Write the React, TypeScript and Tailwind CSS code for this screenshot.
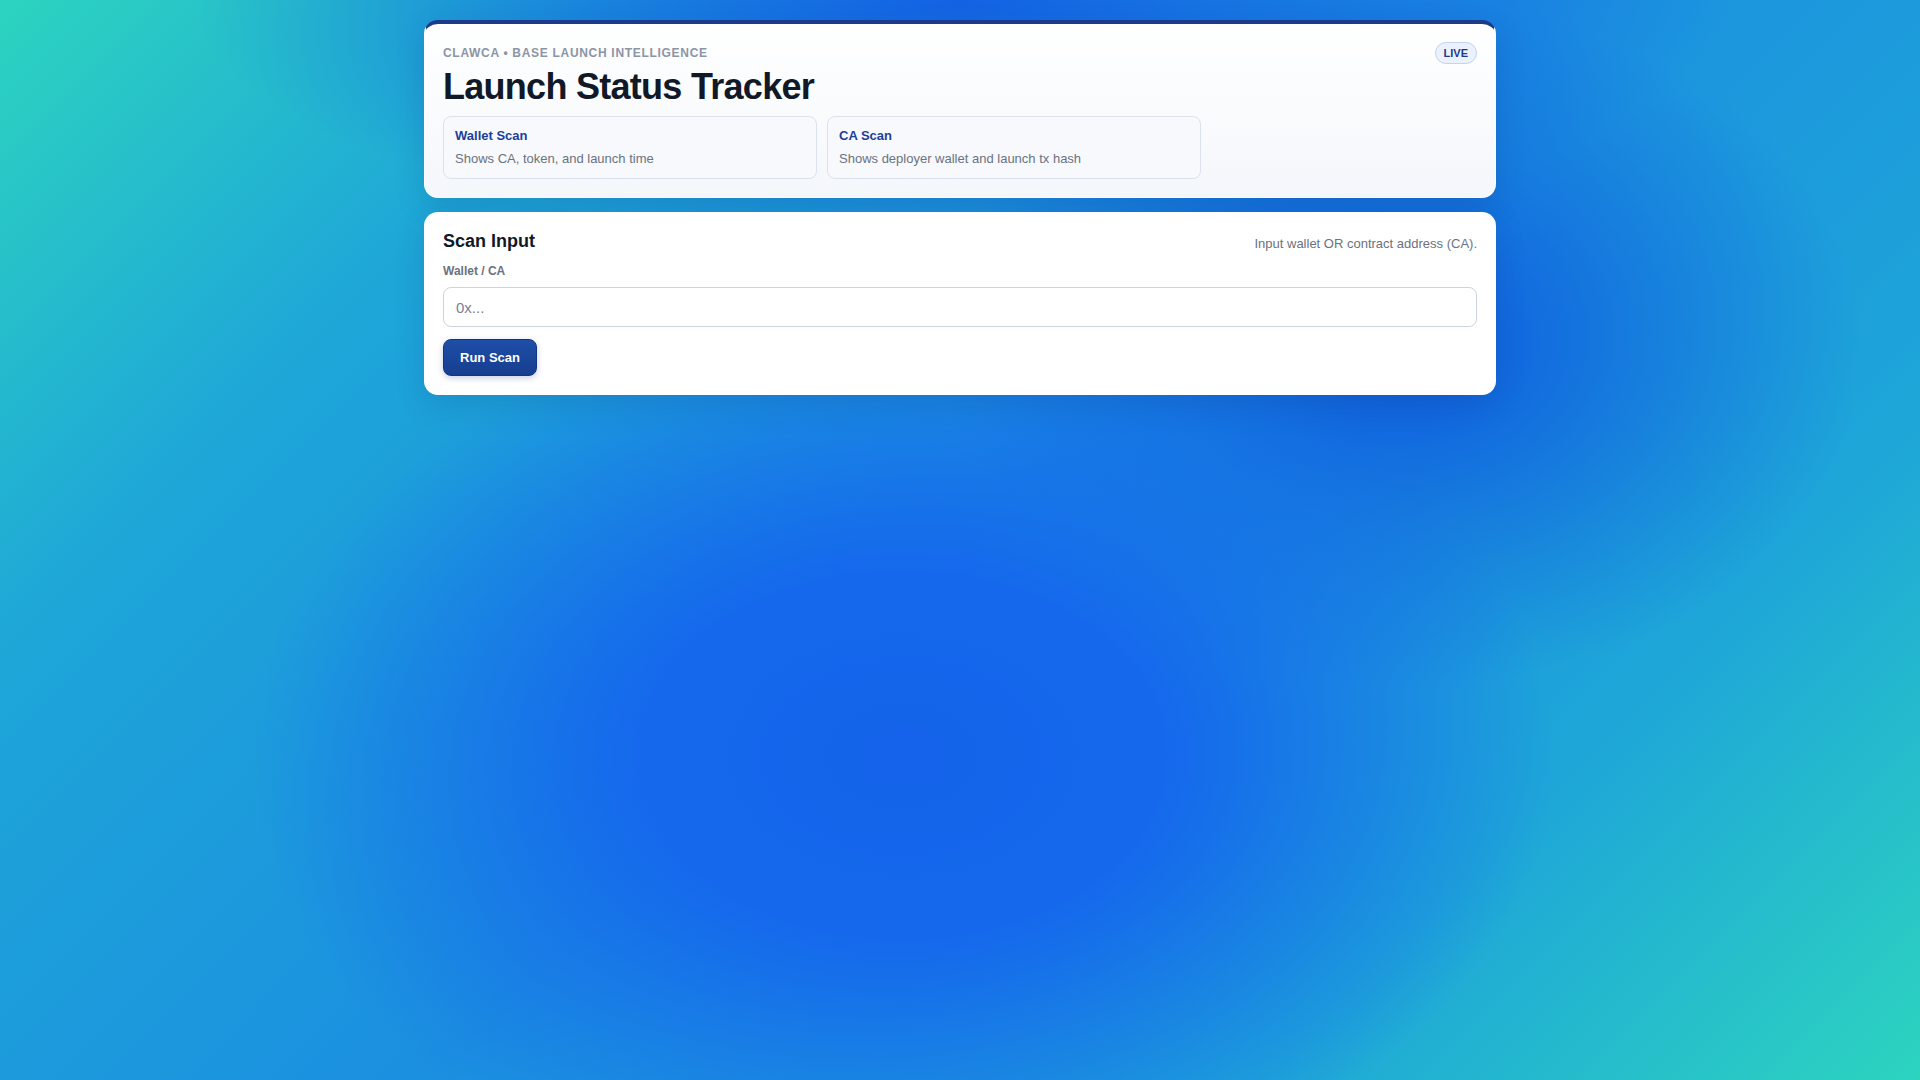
const scanModes = [
  { title: "Wallet Scan", desc: "Shows CA, token, and launch time" },
  { title: "CA Scan", desc: "Shows deployer wallet and launch tx hash" },
];

export default function App() {
  return (
    <div className="min-h-screen w-full font-['Liberation_Sans',Arial,sans-serif] bg-[radial-gradient(ellipse_34%_42%_at_47%_70%,#1463ea_0%,#1568ec_40%,rgba(22,104,236,0)_100%),radial-gradient(ellipse_24%_32%_at_73%_32%,#0f5bdf_0%,rgba(15,91,223,0)_100%),radial-gradient(ellipse_40%_22%_at_50%_0%,#1462e4_0%,rgba(20,98,228,0)_100%),linear-gradient(135deg,#2dd4bf_0%,#1ea6d8_22%,#1b8fe0_50%,#1ea6d8_78%,#2dd4bf_100%)]">
      <div className="mx-auto flex max-w-[1072px] flex-col gap-[14px] pt-5">
        {/* header card */}
        <div className="rounded-[14px] border border-t-4 border-white/70 border-t-[#1e3a8a] bg-gradient-to-b from-white to-[#f4f7fb] px-[18px] pb-[18px] pt-[18px] shadow-[0_10px_30px_rgba(15,40,100,0.15)]">
          <div className="flex items-center justify-between">
            <span className="text-[12px] font-bold uppercase tracking-[0.058em] text-[#8b95a6]">
              CLAWCA • Base Launch Intelligence
            </span>
            <span className="flex h-[22px] items-center rounded-full border border-[#c3d3f3] bg-[#ebf1fd] px-[8px] text-[11px] font-bold text-[#1e3a8a]">
              LIVE
            </span>
          </div>
          <h1 className="mt-[5px] text-[36px] font-bold leading-none tracking-[-0.02em] text-[#111827]">
            Launch Status Tracker
          </h1>
          <div className="mt-[11px] grid max-w-[758px] grid-cols-2 gap-[10px]">
            {scanModes.map((m) => (
              <div
                key={m.title}
                className="rounded-[8px] border border-[#dce2eb] bg-[#f7f9fd] p-[11px]"
              >
                <div className="text-[13px] font-bold leading-[16px] text-[#1d3f9a]">
                  {m.title}
                </div>
                <div className="mt-[7px] text-[13px] leading-[16px] text-[#6b7280]">
                  {m.desc}
                </div>
              </div>
            ))}
          </div>
        </div>

        {/* scan input card */}
        <div className="rounded-[14px] border border-white/70 bg-white px-[18px] pb-[18px] pt-[18px] shadow-[0_10px_30px_rgba(15,40,100,0.15)]">
          <div className="flex items-end justify-between">
            <h2 className="text-[18px] font-bold leading-[20px] text-[#111827]">Scan Input</h2>
            <span className="text-[13px] leading-[15px] text-[#6b7280]">
              Input wallet OR contract address (CA).
            </span>
          </div>
          <label className="mt-[13px] mb-[9px] block text-[12px] font-bold leading-[14px] text-[#6b7280]">
            Wallet / CA
          </label>
          <input
            type="text"
            placeholder="0x..."
            className="block h-10 w-full rounded-[8px] border border-[#cdd4de] bg-white px-3 text-[15px] text-[#111827] outline-none placeholder:text-[#7b8190]"
          />
          <button className="mt-3 h-[37px] rounded-[8px] border border-[#153480] bg-gradient-to-b from-[#1e4fa8] to-[#173d8f] px-4 text-[13px] font-bold text-white shadow-[0_2px_6px_rgba(30,58,138,0.25)]">
            Run Scan
          </button>
        </div>
      </div>
    </div>
  );
}
